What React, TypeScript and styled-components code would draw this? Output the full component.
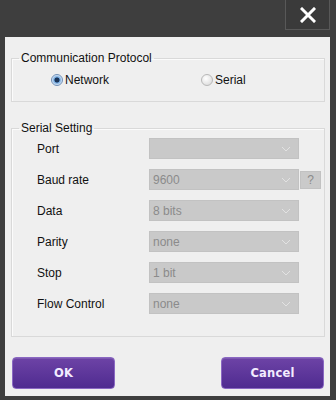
import React from 'react';
import styled, { createGlobalStyle } from 'styled-components';

const GlobalStyle = createGlobalStyle`
  html, body {
    margin: 0;
    padding: 0;
    background: #3f3f3f;
  }
  body {
    font-family: "Liberation Sans", Arial, sans-serif;
  }
`

const Frame = styled.div`
  width: 336px;
  height: 400px;
  box-sizing: border-box;
  background: #3e3e3e;
  padding: 0 6px 5px 5px;
  display: flex;
  flex-direction: column;
`

const Header = styled.div`
  height: 37px;
  flex-shrink: 0;
  display: flex;
  justify-content: flex-end;
  align-items: flex-start;
`

const CloseButton = styled.button`
  width: 45px;
  height: 30px;
  box-sizing: border-box;
  border: 1px solid #585858;
  border-top: none;
  background: #3a3a3a;
  padding: 0;
  display: flex;
  align-items: center;
  justify-content: center;
  cursor: pointer;
`

const Panel = styled.div`
  flex: 1;
  background: #efefef;
  padding: 14px 5px 7px 6px;
  display: flex;
  flex-direction: column;
`

const Group = styled.fieldset<{ $gap?: number }>`
  margin: ${p => p.$gap ?? 0}px 0 0 0;
  padding: 0;
  border: 1px solid #d9d9d9;
  box-shadow: inset 1px 1px 0 #fbfbfb;
  min-inline-size: 0;
`

const Legend = styled.legend`
  margin-left: 7px;
  padding: 0 2px;
  font-size: 12px;
  line-height: 15px;
  color: #111;
`

const RadioRow = styled.div`
  display: flex;
  margin: 6px 0 13px 39px;
  height: 16px;
  align-items: center;
`

const RadioItem = styled.label<{ $width?: number }>`
  display: flex;
  align-items: center;
  gap: 2px;
  width: ${p => (p.$width ? `${p.$width}px` : 'auto')};
  font-size: 12px;
  color: #111;
`

const RadioDot = styled.span<{ $checked?: boolean }>`
  width: 12px;
  height: 12px;
  border-radius: 50%;
  box-sizing: border-box;
  border: 1px solid ${p => (p.$checked ? '#6f8fb6' : '#b8b8b8')};
  background: ${p =>
    p.$checked
      ? 'radial-gradient(circle, #1b3558 0 2.2px, #6aa1d9 2.8px, #dbeafa 5px)'
      : 'radial-gradient(circle at 40% 35%, #ffffff 0, #e6e6e6 60%, #d6d6d6 100%)'};
`

const Rows = styled.div`
  display: grid;
  row-gap: 10px;
  margin: 2px 0 22px 25px;
`

const Row = styled.div`
  display: flex;
  align-items: center;
  height: 21px;
`

const Label = styled.span`
  width: 112px;
  font-size: 12px;
  color: #111;
`

const Select = styled.div`
  width: 150px;
  height: 21px;
  box-sizing: border-box;
  background: #c9c9c9;
  border: 1px solid #c2c2c2;
  display: flex;
  align-items: center;
  justify-content: space-between;
  padding: 0 7px 0 3px;
  font-size: 12px;
  color: #8b8b8b;
`

const HelpBox = styled.div`
  width: 21px;
  height: 18px;
  margin-left: 1px;
  box-sizing: border-box;
  background: #cacaca;
  border: 1px solid #c2c2c2;
  display: flex;
  align-items: center;
  justify-content: center;
  font-size: 12px;
  color: #8b8b8b;
`

const Buttons = styled.div`
  display: flex;
  justify-content: space-between;
  margin-top: 20px;
  padding: 0 1px 0 1px;
`

const ActionButton = styled.button`
  width: 103px;
  height: 32px;
  border-radius: 4px;
  border: 1px solid #8a68c2;
  background: linear-gradient(#6d43a6, #4f2b90);
  box-shadow: inset 0 1px 0 rgba(255, 255, 255, 0.12);
  color: #f3ecff;
  font-family: "DejaVu Sans", Verdana, sans-serif;
  font-weight: bold;
  font-size: 11.5px;
  letter-spacing: 0.2px;
  cursor: pointer;
`

const Chevron = () => (
  <svg width="10" height="6" viewBox="0 0 10 6">
    <path d="M1 1 L5 5 L9 1" fill="none" stroke="#e2e2e2" strokeWidth="1" />
  </svg>
)

const fields = [
  { label: 'Port', value: '' },
  { label: 'Baud rate', value: '9600', help: true },
  { label: 'Data', value: '8 bits' },
  { label: 'Parity', value: 'none' },
  { label: 'Stop', value: '1 bit' },
  { label: 'Flow Control', value: 'none' },
]

export default function App() {
  return (
    <>
      <GlobalStyle />
      <Frame>
        <Header>
          <CloseButton aria-label="Close">
            <svg width="16" height="16" viewBox="0 0 16 16">
              <path d="M2 2 L14 14 M14 2 L2 14" stroke="#fff" strokeWidth="3" strokeLinecap="square" />
            </svg>
          </CloseButton>
        </Header>
        <Panel>
          <Group>
            <Legend>Communication Protocol</Legend>
            <RadioRow>
              <RadioItem $width={150}>
                <RadioDot $checked />
                Network
              </RadioItem>
              <RadioItem>
                <RadioDot />
                Serial
              </RadioItem>
            </RadioRow>
          </Group>
          <Group $gap={19}>
            <Legend>Serial Setting</Legend>
            <Rows>
              {fields.map(f => (
                <Row key={f.label}>
                  <Label>{f.label}</Label>
                  <Select>
                    <span>{f.value}</span>
                    <Chevron />
                  </Select>
                  {f.help && <HelpBox>?</HelpBox>}
                </Row>
              ))}
            </Rows>
          </Group>
          <Buttons>
            <ActionButton>OK</ActionButton>
            <ActionButton>Cancel</ActionButton>
          </Buttons>
        </Panel>
      </Frame>
    </>
  )
}
